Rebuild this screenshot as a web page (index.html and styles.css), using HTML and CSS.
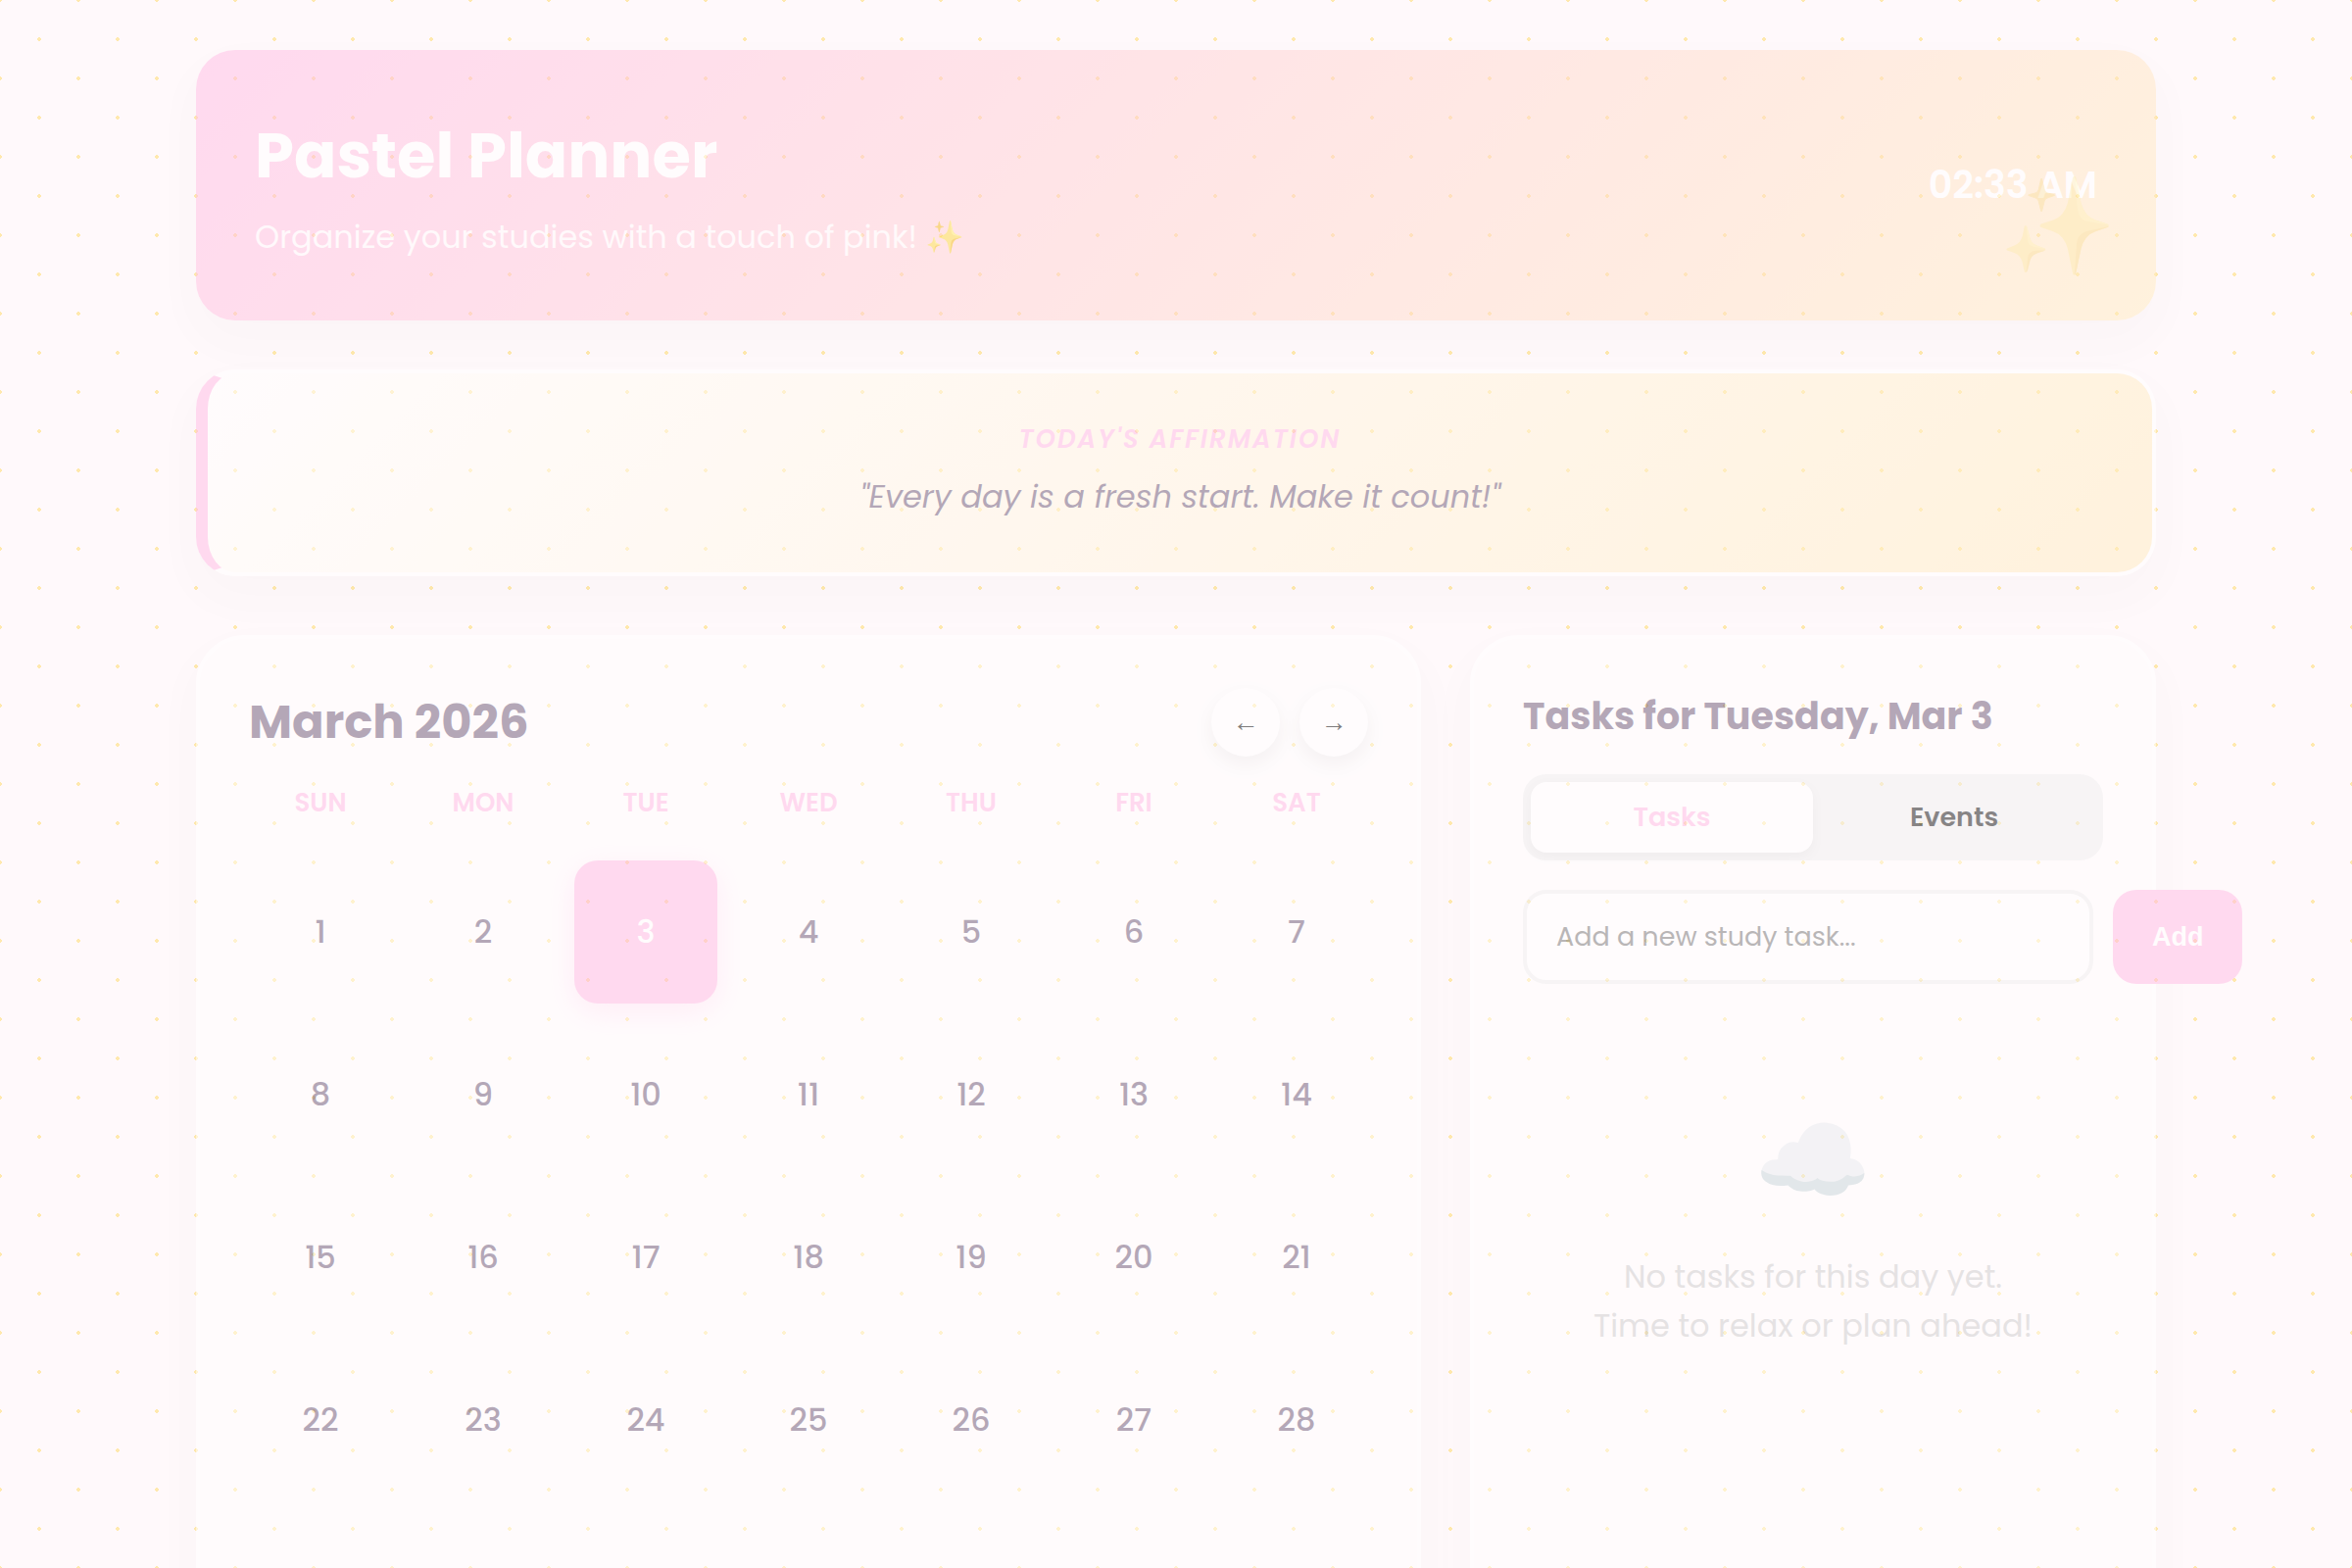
FILE: index.html
```html
<!DOCTYPE html>
<html lang="en">
<head>
<meta charset="utf-8">
<title>Pastel Planner</title>
<meta name="viewport" content="width=device-width, initial-scale=1">
<link rel="stylesheet" href="styles.css">
</head>
<body>
<div class="planner">
  <header class="banner">
    <div>
      <h1 class="banner-title">Pastel Planner</h1>
      <p class="banner-text">Organize your studies with a touch of pink! ✨</p>
    </div>
    <time class="clock">02:33 AM</time>
    <span class="sparkle" aria-hidden="true">✨</span>
  </header>

  <section class="affirmation">
    <h2 class="affirmation-label">Today's Affirmation</h2>
    <p class="affirmation-quote">"Every day is a fresh start. Make it count!"</p>
  </section>

  <main class="columns">
    <section class="card">
      <div class="month-bar">
        <h2 class="month">March 2026</h2>
        <div class="month-nav">
          <button class="round" type="button" aria-label="Previous month">←</button>
          <button class="round" type="button" aria-label="Next month">→</button>
        </div>
      </div>
      <div class="weekdays">
        <span>Sun</span><span>Mon</span><span>Tue</span><span>Wed</span><span>Thu</span><span>Fri</span><span>Sat</span>
      </div>
      <div class="days">
        <button class="day" type="button">1</button><button class="day" type="button">2</button><button class="day selected" type="button">3</button><button class="day" type="button">4</button><button class="day" type="button">5</button><button class="day" type="button">6</button><button class="day" type="button">7</button>
        <button class="day" type="button">8</button><button class="day" type="button">9</button><button class="day" type="button">10</button><button class="day" type="button">11</button><button class="day" type="button">12</button><button class="day" type="button">13</button><button class="day" type="button">14</button>
        <button class="day" type="button">15</button><button class="day" type="button">16</button><button class="day" type="button">17</button><button class="day" type="button">18</button><button class="day" type="button">19</button><button class="day" type="button">20</button><button class="day" type="button">21</button>
        <button class="day" type="button">22</button><button class="day" type="button">23</button><button class="day" type="button">24</button><button class="day" type="button">25</button><button class="day" type="button">26</button><button class="day" type="button">27</button><button class="day" type="button">28</button>
        <button class="day" type="button">29</button><button class="day" type="button">30</button><button class="day" type="button">31</button>
      </div>
    </section>

    <section class="card">
      <h2 class="tasks-title">Tasks for Tuesday, Mar 3</h2>
      <div class="tabs">
        <button class="tab active" type="button">Tasks</button>
        <button class="tab" type="button">Events</button>
      </div>
      <form class="add-form">
        <input class="add-input" type="text" aria-label="New study task" placeholder="Add a new study task...">
        <button class="add-button" type="button">Add</button>
      </form>
      <div class="empty">
        <span class="cloud" aria-hidden="true">☁️</span>
        <p class="empty-text">No tasks for this day yet.<br>Time to relax or plan ahead!</p>
      </div>
    </section>
  </main>
</div>
</body>
</html>
```

FILE: styles.css
```css
:root {
  --pink: #ffbbe5;
  --cream: #ffecbf;
  --ink: #6b5876;
  --font: Poppins, "Noto Sans", "Noto Color Emoji", sans-serif;
}

* { box-sizing: border-box; }

body {
  margin: 0;
  min-height: 100vh;
  background-color: #fff9fb;
  background-image:
    radial-gradient(#ffe9ae 2px, transparent 2px),
    radial-gradient(#ffe9ae 2px, transparent 2px);
  background-size: 80px 80px;
  background-position: -40px -40px, 0 0;
  color: var(--ink);
  font: 400 32px/48px var(--font);
}

h1, h2, p { margin: 0; }

button, input { font-family: inherit; }

button {
  border: 0;
  padding: 0;
  cursor: pointer;
}

.planner {
  width: calc(100% - 80px);
  max-width: 2000px;
  margin: 0 auto;
  padding: 51px 0 60px;
  opacity: 0.5;
}

.banner {
  position: relative;
  display: flex;
  align-items: center;
  justify-content: space-between;
  padding: 60px;
  border-radius: 40px;
  background: linear-gradient(135deg, var(--pink), var(--cream));
  box-shadow: 0 20px 50px rgba(0, 0, 0, 0.03);
  color: #fff;
}

.banner-title {
  margin-bottom: 10px;
  font-size: 64px;
  line-height: 96px;
}

.banner-text {
  line-height: 50px;
  opacity: 0.9;
}

.clock {
  font-size: 38px;
  font-weight: 600;
}

.sparkle {
  position: absolute;
  right: 40px;
  bottom: 24px;
  font-size: 96px;
  line-height: 144px;
  opacity: 0.3;
}

.affirmation {
  margin-top: 50px;
  padding: 50px 50px 52px;
  border: 4px solid #fff;
  border-left: 12px solid var(--pink);
  border-radius: 40px;
  background: linear-gradient(135deg, #fff, var(--cream));
  box-shadow: 0 20px 50px rgba(0, 0, 0, 0.03);
  font-style: italic;
  text-align: center;
}

.affirmation-label {
  margin-bottom: 16px;
  color: var(--pink);
  font-size: 26px;
  font-weight: 600;
  line-height: 34px;
  letter-spacing: 2px;
  text-transform: uppercase;
}

.affirmation-quote { line-height: 51px; }

.columns {
  display: grid;
  grid-template-columns: 25fr 14fr;
  gap: 50px;
  margin-top: 60px;
}

.card {
  min-width: 0;
  padding: 50px;
  border: 4px solid #fff;
  border-radius: 50px;
  background: rgba(255, 255, 255, 0.8);
  box-shadow: 0 20px 50px rgba(0, 0, 0, 0.03);
}

.month-bar {
  display: flex;
  align-items: center;
  justify-content: space-between;
}

.month { font-size: 48px; }

.month-nav {
  display: flex;
  gap: 20px;
}

.round {
  width: 70px;
  height: 70px;
  border-radius: 50%;
  background: #fff;
  box-shadow: 0 8px 20px rgba(0, 0, 0, 0.08);
  color: #000;
  font-family: "Liberation Sans", sans-serif;
  font-size: 27px;
}

.weekdays, .days {
  display: grid;
  grid-template-columns: repeat(7, 1fr);
  gap: 20px;
}

.weekdays {
  padding: 27px 0 39px;
  color: var(--pink);
  font-size: 26px;
  font-weight: 600;
  line-height: 40px;
  text-align: center;
  text-transform: uppercase;
}

.day {
  aspect-ratio: 1;
  border-radius: 24px;
  background: transparent;
  color: var(--ink);
  font-size: 32px;
  font-weight: 500;
}

.day.selected {
  background: var(--pink);
  box-shadow: 0 8px 30px rgba(255, 186, 230, 0.4);
  color: #fff;
}

.tasks-title {
  font-size: 38px;
  line-height: 58px;
}

.tabs {
  display: flex;
  margin: 30px 0;
  padding: 8px;
  border-radius: 24px;
  background: #f0f0f0;
}

.tab {
  flex: 1;
  height: 72px;
  border-radius: 16px;
  background: transparent;
  color: #111;
  font-size: 27px;
  font-weight: 600;
}

.tab.active {
  background: #fff;
  box-shadow: 0 4px 12px rgba(0, 0, 0, 0.06);
  color: var(--pink);
}

.add-form {
  display: flex;
  gap: 20px;
}

.add-input {
  flex: none;
  width: calc(100% - 10px);
  height: 96px;
  padding: 0 30px;
  border: 4px solid #f0f0f0;
  border-radius: 24px;
  background: #fff;
  font-size: 27px;
}

.add-input::placeholder { color: #757575; }

.add-button {
  flex: none;
  padding: 0 40px;
  border-radius: 24px;
  background: var(--pink);
  color: #fff;
  font-family: "Liberation Sans", sans-serif;
  font-size: 27px;
  font-weight: 700;
}

.empty {
  padding-top: 120px;
  color: #ccc;
  text-align: center;
}

.cloud {
  display: block;
  font-size: 96px;
  line-height: 120px;
  opacity: 0.8;
}

.empty-text {
  margin-top: 34px;
  line-height: 50px;
}
```
